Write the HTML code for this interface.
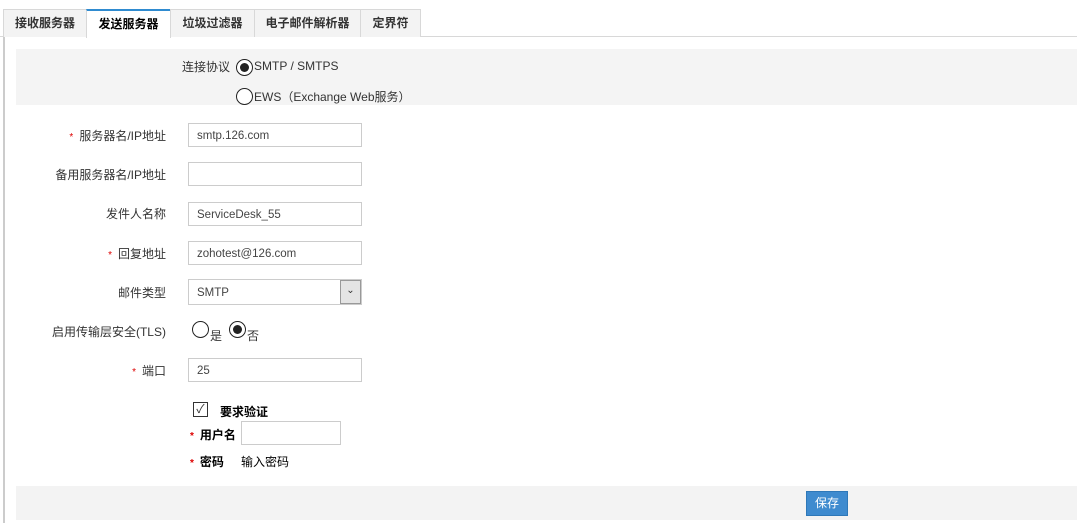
<!DOCTYPE html>
<html><head><meta charset="utf-8"><style>
*{box-sizing:border-box;margin:0;padding:0}
body{width:1077px;height:523px;background:#fff;font-family:"Liberation Sans","Noto Sans CJK SC",sans-serif;font-size:12px;color:#333;position:relative;overflow:hidden}
.a{position:absolute}
.tab{position:absolute;top:9px;height:28px;background:#f3f3f3;border:1px solid #d8d8d8;border-bottom:none;font-weight:bold;line-height:27px;text-align:center;font-size:12px;color:#333}
.tab.on{background:#fff;border-top:2px solid #2f8bd0;height:29px;line-height:26px;color:#000}
.lbl{position:absolute;right:911px;text-align:right;white-space:nowrap}
.star{color:#d00;margin-right:6px;font-size:10px}
.inp{position:absolute;left:188px;width:174px;height:24px;border:1px solid #ccc;background:#fff;padding-left:8px;line-height:24px;font-size:11.5px;color:#444}
.radio{position:absolute;width:17px;height:17px;border:1.5px solid #222;border-radius:50%;background:#fff}
.radio.on::after{content:"";position:absolute;left:2.5px;top:2.5px;width:9px;height:9px;border-radius:50%;background:#222}
</style></head><body>
<div class="a" style="left:0;top:36px;width:1077px;height:1px;background:#d8d8d8"></div>
<div class="tab" style="left:3px;width:84px">接收服务器</div>
<div class="tab on" style="left:86px;width:85px">发送服务器</div>
<div class="tab" style="left:170px;width:85px">垃圾过滤器</div>
<div class="tab" style="left:254px;width:107px">电子邮件解析器</div>
<div class="tab" style="left:360px;width:61px">定界符</div>
<div class="a" style="left:3px;top:37px;width:2px;height:486px;background:#ccc"></div>
<div class="a" style="left:16px;top:49px;width:1061px;height:56px;background:#f4f4f4"></div>
<div class="a" style="left:182px;top:58px">连接协议</div>
<div class="radio on" style="left:236px;top:59px"></div>
<div class="a" style="left:254px;top:59px">SMTP / SMTPS</div>
<div class="radio" style="left:236px;top:88px"></div>
<div class="a" style="left:254px;top:88px">EWS（Exchange Web服务）</div>

<div class="lbl" style="top:127px"><span class="star">*</span>服务器名/IP地址</div>
<div class="inp" style="top:123px">smtp.126.com</div>
<div class="lbl" style="top:166px">备用服务器名/IP地址</div>
<div class="inp" style="top:162px"></div>
<div class="lbl" style="top:205px">发件人名称</div>
<div class="inp" style="top:202px">ServiceDesk_55</div>
<div class="lbl" style="top:245px"><span class="star">*</span>回复地址</div>
<div class="inp" style="top:241px">zohotest@126.com</div>
<div class="lbl" style="top:284px">邮件类型</div>
<div class="inp" style="top:279px;height:26px;line-height:26px">SMTP</div>
<div class="a" style="left:340px;top:280px;width:21px;height:24px;background:#e4e4e4;border:1px solid #999;text-align:center;line-height:20px;font-size:10px">&#8964;</div>
<div class="lbl" style="top:323px">启用传输层安全(TLS)</div>
<div class="radio" style="left:192px;top:321px"></div><div class="a" style="left:210px;top:327px">是</div>
<div class="radio on" style="left:229px;top:321px"></div><div class="a" style="left:247px;top:327px">否</div>
<div class="lbl" style="top:362px"><span class="star">*</span>端口</div>
<div class="inp" style="top:358px">25</div>
<div class="a" style="left:193px;top:402px;width:15px;height:15px;border:1px solid #333;font-size:12px;line-height:13px;text-align:center">✓</div>
<div class="a" style="left:220px;top:403px;font-weight:bold;color:#000">要求验证</div>
<div class="a" style="left:190px;top:426px;font-weight:bold;color:#000"><span class="star">*</span>用户名</div>
<div class="a" style="left:241px;top:421px;width:100px;height:24px;border:1px solid #ccc"></div>
<div class="a" style="left:190px;top:453px;font-weight:bold;color:#000"><span class="star">*</span>密码</div>
<div class="a" style="left:241px;top:453px;color:#000">输入密码</div>
<div class="a" style="left:16px;top:486px;width:1061px;height:34px;background:#f3f3f3"></div>
<div class="a" style="left:806px;top:491px;width:42px;height:25px;background:#3f8bcf;border:1px solid #2f78b8;color:#fff;text-align:center;line-height:23px">保存</div>
</body></html>
